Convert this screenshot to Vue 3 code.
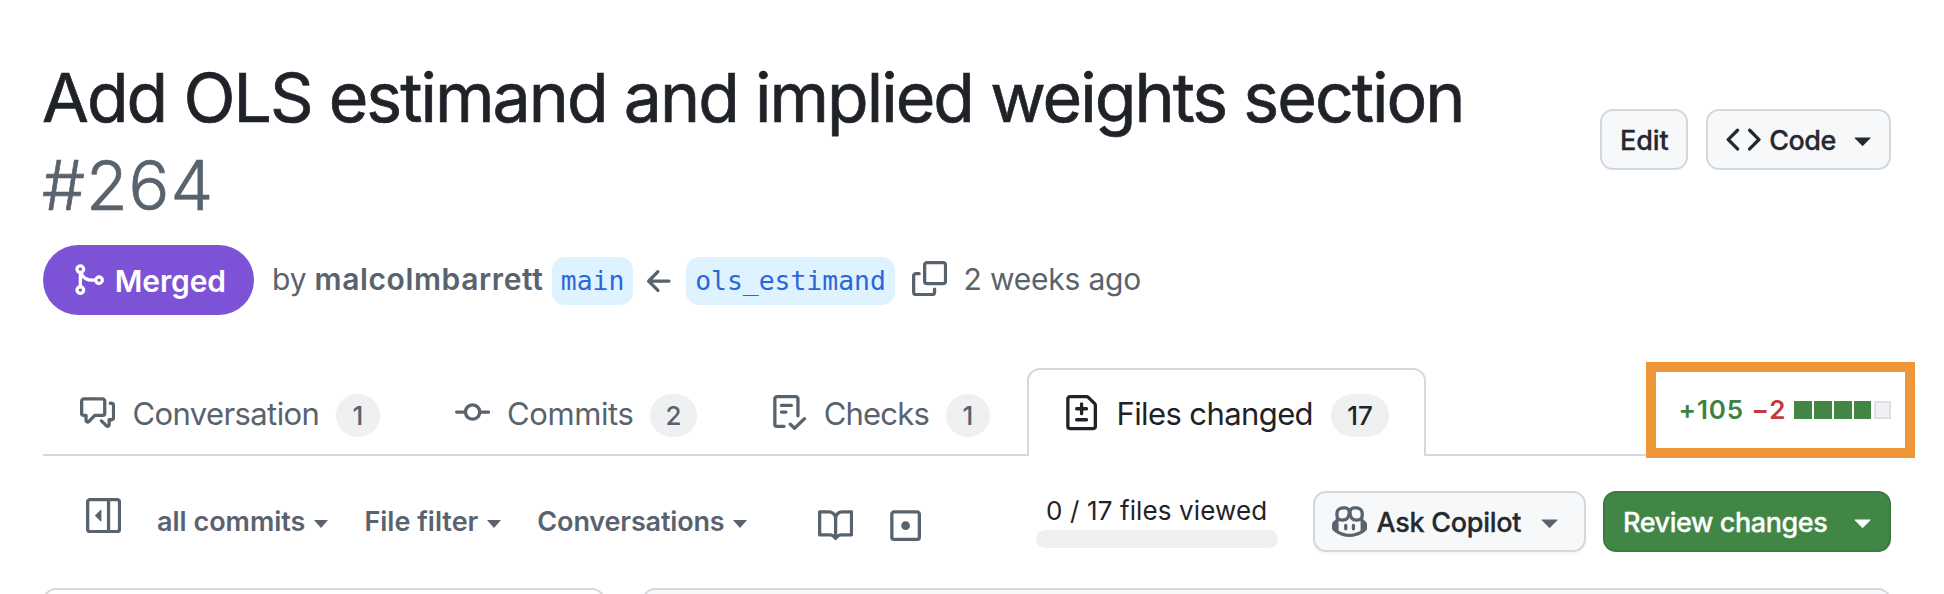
<script setup>
const icons = {
  merge: 'M5.45 5.154A4.25 4.25 0 0 0 9.25 7.5h1.378a2.251 2.251 0 1 1 0 1.5H9.25A5.734 5.734 0 0 1 5 7.123v3.505a2.25 2.25 0 1 1-1.5 0V5.372a2.25 2.25 0 1 1 1.95-.218ZM4.25 13.5a.75.75 0 1 0 0-1.5.75.75 0 0 0 0 1.5Zm8.5-4.5a.75.75 0 1 0 0-1.5.75.75 0 0 0 0 1.5ZM5 3.25a.75.75 0 1 0 0 .005V3.25Z',
  arrow: 'M7.78 12.53a.75.75 0 0 1-1.06 0L2.47 8.28a.75.75 0 0 1 0-1.06l4.25-4.25a.751.751 0 0 1 1.042.018.751.751 0 0 1 .018 1.042L4.81 7h7.44a.75.75 0 0 1 0 1.5H4.81l2.97 2.97a.75.75 0 0 1 0 1.06Z',
  copy: 'M0 6.75C0 5.784.784 5 1.75 5h1.5a.75.75 0 0 1 0 1.5h-1.5a.25.25 0 0 0-.25.25v7.5c0 .138.112.25.25.25h7.5a.25.25 0 0 0 .25-.25v-1.5a.75.75 0 0 1 1.5 0v1.5A1.75 1.75 0 0 1 9.25 16h-7.5A1.75 1.75 0 0 1 0 14.25ZM5 1.75C5 .784 5.784 0 6.75 0h7.5C15.216 0 16 .784 16 1.75v7.5A1.75 1.75 0 0 1 14.25 11h-7.5A1.75 1.75 0 0 1 5 9.25Zm1.75-.25a.25.25 0 0 0-.25.25v7.5c0 .138.112.25.25.25h7.5a.25.25 0 0 0 .25-.25v-7.5a.25.25 0 0 0-.25-.25Z',
  code: 'm11.28 3.22 4.25 4.25a.75.75 0 0 1 0 1.06l-4.25 4.25a.749.749 0 0 1-1.275-.326.749.749 0 0 1 .215-.734L13.94 8l-3.72-3.72a.749.749 0 0 1 .326-1.275.749.749 0 0 1 .734.215Zm-6.56 0a.751.751 0 0 1 1.042.018.751.751 0 0 1 .018 1.042L2.06 8l3.72 3.72a.749.749 0 0 1-.326 1.275.749.749 0 0 1-.734-.215L.47 8.53a.75.75 0 0 1 0-1.06Z',
  caret: 'm4.427 7.427 3.396 3.396a.25.25 0 0 0 .354 0l3.396-3.396A.25.25 0 0 0 11.396 7H4.604a.25.25 0 0 0-.177.427Z',
  discussion: 'M1.75 1h8.5c.966 0 1.75.784 1.75 1.75v5.5A1.75 1.75 0 0 1 10.25 10H7.061l-2.574 2.573A1.458 1.458 0 0 1 2 11.543V10h-.25A1.75 1.75 0 0 1 0 8.25v-5.5C0 1.784.784 1 1.75 1ZM1.5 2.75v5.5c0 .138.112.25.25.25h1a.75.75 0 0 1 .75.75v2.19l2.72-2.72a.749.749 0 0 1 .53-.22h3.5a.25.25 0 0 0 .25-.25v-5.5a.25.25 0 0 0-.25-.25h-8.5a.25.25 0 0 0-.25.25Zm13 2a.25.25 0 0 0-.25-.25h-.5a.75.75 0 0 1 0-1.5h.5c.966 0 1.75.784 1.75 1.75v5.5A1.75 1.75 0 0 1 14.25 12H14v1.543a1.458 1.458 0 0 1-2.487 1.03L9.22 12.28a.749.749 0 0 1 .326-1.275.749.749 0 0 1 .734.215l2.22 2.22v-2.19a.75.75 0 0 1 .75-.75h1a.25.25 0 0 0 .25-.25Z',
  commit: 'M11.93 8.5a4.002 4.002 0 0 1-7.86 0H.75a.75.75 0 0 1 0-1.5h3.32a4.002 4.002 0 0 1 7.86 0h3.32a.75.75 0 0 1 0 1.5Zm-1.43-.75a2.5 2.5 0 1 0-5 0 2.5 2.5 0 0 0 5 0Z',
  checklist: 'M2.5 1.75v11.5c0 .138.112.25.25.25h3.17a.75.75 0 0 1 0 1.5H2.75A1.75 1.75 0 0 1 1 13.25V1.75C1 .784 1.784 0 2.75 0h8.5C12.216 0 13 .784 13 1.75v7.736a.75.75 0 0 1-1.5 0V1.75a.25.25 0 0 0-.25-.25h-8.5a.25.25 0 0 0-.25.25Zm13.274 9.537v-.001l-4.557 4.45a.75.75 0 0 1-1.055-.008l-1.943-1.95a.75.75 0 0 1 1.062-1.058l1.419 1.425 4.026-3.932a.75.75 0 1 1 1.048 1.074ZM4.75 4h4.5a.75.75 0 0 1 0 1.5h-4.5a.75.75 0 0 1 0-1.5ZM4 7.75A.75.75 0 0 1 4.75 7h2a.75.75 0 0 1 0 1.5h-2A.75.75 0 0 1 4 7.75Z',
  diff: 'M1 1.75C1 .784 1.784 0 2.75 0h7.586c.464 0 .909.184 1.237.513l2.914 2.914c.329.328.513.773.513 1.237v9.586A1.75 1.75 0 0 1 13.25 16H2.75A1.75 1.75 0 0 1 1 14.25Zm1.75-.25a.25.25 0 0 0-.25.25v12.5c0 .138.112.25.25.25h10.5a.25.25 0 0 0 .25-.25V4.664a.25.25 0 0 0-.073-.177l-2.914-2.914a.25.25 0 0 0-.177-.073ZM8 3.25a.75.75 0 0 1 .75.75v1.5h1.5a.75.75 0 0 1 0 1.5h-1.5v1.5a.75.75 0 0 1-1.5 0V7h-1.5a.75.75 0 0 1 0-1.5h1.5V4A.75.75 0 0 1 8 3.25Zm-3 8a.75.75 0 0 1 .75-.75h4.5a.75.75 0 0 1 0 1.5h-4.5a.75.75 0 0 1-.75-.75Z',
  sidebar: 'm4.177 7.823 2.396-2.396A.25.25 0 0 1 7 5.604v4.792a.25.25 0 0 1-.427.177L4.177 8.177a.25.25 0 0 1 0-.354ZM0 1.75C0 .784.784 0 1.75 0h12.5C15.216 0 16 .784 16 1.75v12.5A1.75 1.75 0 0 1 14.25 16H1.75A1.75 1.75 0 0 1 0 14.25Zm1.75-.25a.25.25 0 0 0-.25.25v12.5c0 .138.112.25.25.25H9.5v-13Zm12.5 13a.25.25 0 0 0 .25-.25V1.75a.25.25 0 0 0-.25-.25H11v13Z',
  book: 'M0 1.75A.75.75 0 0 1 .75 1h4.253c1.227 0 2.317.59 3 1.501A3.743 3.743 0 0 1 11.006 1h4.245a.75.75 0 0 1 .75.75v10.5a.75.75 0 0 1-.75.75h-4.507a2.25 2.25 0 0 0-1.591.659l-.622.621a.75.75 0 0 1-1.06 0l-.622-.621A2.25 2.25 0 0 0 5.258 13H.75a.75.75 0 0 1-.75-.75Zm7.251 10.324.004-5.073-.002-2.253A2.25 2.25 0 0 0 5.003 2.5H1.5v9h3.757a3.75 3.75 0 0 1 1.994.574ZM8.755 4.75l-.004 7.322a3.752 3.752 0 0 1 1.992-.572H14.5v-9h-3.495a2.25 2.25 0 0 0-2.25 2.25Z',
  dot: 'M8 10a2 2 0 1 1 0-4 2 2 0 0 1 0 4ZM1 2.75C1 1.784 1.784 1 2.75 1h10.5c.966 0 1.75.784 1.75 1.75v10.5A1.75 1.75 0 0 1 13.25 15H2.75A1.75 1.75 0 0 1 1 13.25Zm1.75-.25a.25.25 0 0 0-.25.25v10.5c0 .138.112.25.25.25h10.5a.25.25 0 0 0 .25-.25V2.75a.25.25 0 0 0-.25-.25Z',
  copilot: 'M7.998 15.035c-4.562 0-7.873-2.914-7.998-3.749V9.338c.085-.628.677-1.686 1.588-2.065.013-.07.024-.143.036-.218.029-.183.06-.384.126-.612-.201-.508-.254-1.084-.254-1.656 0-.87.128-1.769.693-2.484.579-.733 1.494-1.124 2.724-1.261 1.206-.134 2.262.034 2.944.765.05.053.096.108.139.165.044-.057.094-.112.143-.165.682-.731 1.738-.899 2.944-.765 1.23.137 2.145.528 2.724 1.261.566.715.693 1.614.693 2.484 0 .572-.053 1.148-.254 1.656.066.228.098.429.126.612.012.076.024.148.037.218.924.385 1.522 1.471 1.591 2.095v1.872c0 .766-3.351 3.795-8.002 3.795Zm0-1.485c2.28 0 4.584-1.11 5.002-1.433V7.862l-.023-.116c-.49.21-1.075.291-1.727.291-1.146 0-2.059-.327-2.71-.991A3.222 3.222 0 0 1 8 6.303a3.24 3.24 0 0 1-.544.743c-.65.664-1.563.991-2.71.991-.652 0-1.236-.081-1.727-.291l-.023.116v4.255c.419.323 2.722 1.433 5.002 1.433ZM6.762 2.83c-.193-.206-.637-.413-1.682-.297-1.019.113-1.479.404-1.713.7-.247.312-.369.789-.369 1.554 0 .793.129 1.171.308 1.371.162.181.519.379 1.442.379.853 0 1.339-.235 1.638-.54.315-.322.527-.827.617-1.553.117-.935-.037-1.395-.241-1.614Zm4.155-.297c-1.044-.116-1.488.091-1.681.297-.204.219-.359.679-.242 1.614.091.726.303 1.231.618 1.553.299.305.784.54 1.638.54.922 0 1.28-.198 1.442-.379.179-.2.308-.578.308-1.371 0-.765-.123-1.242-.37-1.554-.233-.296-.693-.587-1.713-.7ZM6.25 9.037a.75.75 0 0 1 .75.75v1.501a.75.75 0 0 1-1.5 0V9.787a.75.75 0 0 1 .75-.75Zm4.25.75v1.501a.75.75 0 0 1-1.5 0V9.787a.75.75 0 0 1 1.5 0Z'
}

const tabs = [
  { key: 'conversation', icon: 'discussion', label: 'Conversation', count: 1 },
  { key: 'commits', icon: 'commit', label: 'Commits', count: 2 },
  { key: 'checks', icon: 'checklist', label: 'Checks', count: 1 },
  { key: 'files', icon: 'diff', label: 'Files changed', count: 17 }
]

const filters = [
  { key: 'all', label: 'all commits' },
  { key: 'by-file', label: 'File filter' },
  { key: 'conv', label: 'Conversations' }
]
</script>

<template>
  <main class="page">
    <header class="header">
      <h1 class="title">
        <span class="name">Add OLS estimand and implied weights section</span>
        <span class="number">#264</span>
      </h1>
      <div class="actions">
        <button class="btn edit">Edit</button>
        <button class="btn code">
          <svg class="icon" viewBox="0 0 16 16"><path :d="icons.code" /></svg>
          <span class="code-label">Code</span>
          <svg class="icon" viewBox="0 0 16 16"><path :d="icons.caret" /></svg>
        </button>
      </div>
    </header>

    <div class="meta">
      <span class="state">
        <svg class="icon" viewBox="0 0 16 16"><path fill-rule="evenodd" :d="icons.merge" /></svg>
        <span>Merged</span>
      </span>
      <span class="by">by</span>
      <strong class="author">malcolmbarrett</strong>
      <code class="branch">main</code>
      <svg class="icon arrow" viewBox="0 0 16 16"><path :d="icons.arrow" /></svg>
      <code class="branch">ols_estimand</code>
      <svg class="icon copy" viewBox="0 0 16 16"><path :d="icons.copy" /></svg>
      <span class="time">2 weeks ago</span>
    </div>

    <nav class="tabs">
      <a v-for="tab in tabs" :key="tab.key" class="tab" :class="[tab.key, { active: tab.key === 'files' }]">
        <svg class="icon" viewBox="0 0 16 16"><path :d="icons[tab.icon]" /></svg>
        <span class="label">{{ tab.label }}</span>
        <span class="count">{{ tab.count }}</span>
      </a>
      <div class="diffstat">
        <span class="added">+105</span>
        <span class="removed">−2</span>
        <span class="blocks">
          <i v-for="n in 5" :key="n" class="block" :class="{ neutral: n === 5 }"></i>
        </span>
      </div>
    </nav>

    <section class="toolbar">
      <svg class="icon sidebar" viewBox="0 0 16 16"><path :d="icons.sidebar" /></svg>
      <span v-for="f in filters" :key="f.key" class="filter" :class="f.key">{{ f.label }}<i class="drop"></i></span>
      <svg class="icon book" viewBox="0 0 16 16"><path :d="icons.book" /></svg>
      <svg class="icon dot" viewBox="0 0 16 16"><path :d="icons.dot" /></svg>
      <div class="viewed">
        <span class="viewed-text">0 / 17 files viewed</span>
        <span class="progress"></span>
      </div>
      <button class="btn copilot">
        <svg class="icon muted" viewBox="0 0 16 16"><path :d="icons.copilot" /></svg>
        <span class="copilot-label">Ask Copilot</span>
        <svg class="icon muted" viewBox="0 0 16 16"><path :d="icons.caret" /></svg>
      </button>
      <button class="btn review">
        <span class="review-label">Review changes</span>
        <svg class="icon" viewBox="0 0 16 16"><path :d="icons.caret" /></svg>
      </button>
    </section>

    <section class="panels">
      <div class="panel tree"></div>
      <div class="panel changes"></div>
    </section>
  </main>
</template>

<style>
body {
  margin: 0;
  background: #fff;
}
</style>

<style scoped>
.page {
  box-sizing: border-box;
  width: 1944px;
  height: 594px;
  padding: 53px 53px 0 43px;
  overflow: hidden;
  display: flex;
  flex-direction: column;
  font-family: Inter, "Liberation Sans", sans-serif;
  color: #1f2328;
  white-space: nowrap;
}
.page * {
  box-sizing: border-box;
}
.icon {
  width: 35.2px;
  height: 35.2px;
  flex: none;
  fill: currentColor;
}
.header {
  height: 176px;
  flex: none;
  display: flex;
  justify-content: space-between;
}
.title {
  margin: 0 0 0 -1px;
  font-size: 68px;
  line-height: 88px;
  font-weight: 400;
  display: flex;
  flex-direction: column;
}
.name {
  letter-spacing: -1.98px;
  -webkit-text-stroke: 0.7px currentColor;
}
.number {
  font-weight: 300;
  color: #59636e;
  letter-spacing: 0.9px;
  -webkit-text-stroke: 0.7px currentColor;
}
.actions {
  display: flex;
  gap: 18px;
  margin-top: 56px;
}
.btn {
  height: 61px;
  padding: 0;
  border: 2px solid #d1d9e0;
  border-radius: 13px;
  background: #f6f8fa;
  color: #25292e;
  font: 500 27px/57px Inter, "Liberation Sans", sans-serif;
  -webkit-text-stroke: 0.3px currentColor;
  display: flex;
  align-items: center;
  flex: none;
  text-align: left;
}
.edit {
  width: 88px;
  padding: 1px 0 0 18px;
  letter-spacing: -0.1px;
}
.code {
  width: 185px;
  padding-left: 18px;
}
.code-label {
  width: 75px;
  margin: 2px -1px 0 8px;
  letter-spacing: -0.5px;
}
.code .icon:last-child {
  margin-left: 2px;
}
.meta {
  height: 70px;
  margin-top: 16px;
  flex: none;
  display: flex;
  align-items: center;
  font-size: 30px;
  line-height: 68px;
  color: #59636e;
}
.state {
  width: 211px;
  height: 70px;
  padding-left: 27.5px;
  border-radius: 35px;
  background: #7c52d6;
  color: #fff;
  font-weight: 600;
  line-height: 72px;
  display: flex;
  align-items: center;
  gap: 9px;
  letter-spacing: -0.1px;
}
.state span {
  margin-top: 2px;
}
.by {
  margin: -2px 0 0 18px;
  width: 42.5px;
}
.author {
  width: 237.5px;
  margin-top: -2px;
  font-weight: 600;
  letter-spacing: 0.62px;
}
.branch {
  height: 48px;
  margin-top: 2px;
  padding: 0 8.8px;
  border-radius: 13px;
  background: #dff2ff;
  color: #2b66d9;
  font: 26.4px/47px "DejaVu Sans Mono", "Liberation Mono", monospace;
}
.arrow {
  margin: 3px 9px 0 9px;
}
.copy {
  margin-left: 17.3px;
  margin-top: -3px;
}
.time {
  margin: -2px 0 0 16.5px;
  letter-spacing: -0.2px;
}
.tabs {
  height: 88px;
  margin-top: 53px;
  flex: none;
  display: flex;
  border-bottom: 2px solid #d1d9e0;
}
.tab {
  height: 88px;
  display: flex;
  align-items: center;
  font-size: 31px;
  line-height: 90px;
  color: #59636e;
}
.tab .icon {
  margin-top: 1px;
}
.tab .label {
  margin-top: 3px;
  line-height: 84px;
}
.count {
  height: 43px;
  margin-top: 7px;
  border-radius: 22px;
  background: #eff0f2;
  font-size: 26px;
  line-height: 43px;
  font-weight: 500;
  text-align: center;
}
.conversation {
  margin-left: 37px;
  width: 375px;
}
.conversation .label {
  width: 203.5px;
  margin-left: 17.3px;
  letter-spacing: -0.6px;
}
.conversation .count {
  width: 44px;
}
.commits {
  width: 315.5px;
}
.commits .label {
  width: 143px;
  margin-left: 16.8px;
  letter-spacing: -0.4px;
}
.commits .count {
  width: 47px;
}
.checks {
  width: 256.5px;
}
.checks .label {
  width: 122.3px;
  margin-left: 18px;
  letter-spacing: -0.8px;
}
.checks .count {
  width: 44px;
}
.active {
  width: 399px;
  padding-left: 34.8px;
  border: 2px solid #d1d9e0;
  border-bottom: 0;
  border-radius: 13px 13px 0 0;
  background: #fff;
  color: #1f2328;
}
.active .icon {
  margin-top: 0;
}
.active .label {
  margin-top: 1px;
  margin-left: 17.5px;
  width: 214.5px;
  letter-spacing: -0.6px;
}
.active .count {
  width: 58px;
  margin-top: 5px;
}
.diffstat {
  position: relative;
  width: 269px;
  height: 96px;
  margin: -6px -24px 0 auto;
  padding-left: 22.5px;
  border: 10px solid #ef9738;
  background: #fff;
  display: flex;
  align-items: center;
  font-size: 26px;
  line-height: 76px;
  font-weight: 600;
}
.added {
  width: 73px;
  color: #3f8043;
  letter-spacing: 0.9px;
}
.removed {
  width: 42.5px;
  color: #c73a3a;
  letter-spacing: 1px;
}
.blocks {
  display: flex;
  gap: 2px;
}
.block {
  width: 18px;
  height: 18px;
  background: #428646;
}
.block:nth-child(4) {
  width: 17px;
  margin-right: 1px;
}
.block.neutral {
  width: 17px;
  background: #eff0f2;
  border: 2px solid #dcdfe4;
}
.toolbar {
  height: 132px;
  flex: none;
  padding-left: 43px;
  display: flex;
  align-items: flex-start;
  color: #59636e;
}
.sidebar {
  margin-top: 42px;
}
.filter {
  margin-top: 36px;
  font-size: 27px;
  line-height: 60px;
  font-weight: 600;
  display: flex;
  align-items: center;
}
.drop {
  margin: 3px 0 0 8.5px;
  border: 7.7px solid transparent;
  border-top: 8.5px solid currentColor;
  border-bottom: 0;
}
.all {
  margin-left: 35.8px;
  width: 207.5px;
}
.by-file {
  width: 173px;
}
.conv {
  width: 280.5px;
  letter-spacing: -0.15px;
}
.book {
  margin-top: 51.8px;
}
.dot {
  margin-top: 51.8px;
  margin-left: 34.6px;
}
.viewed {
  width: 242px;
  margin: 35px 0 0 113.4px;
  display: flex;
  flex-direction: column;
}
.viewed-text {
  padding-left: 10px;
  font-size: 26px;
  line-height: 39px;
  letter-spacing: 0.12px;
  color: #1f2328;
}
.progress {
  height: 18px;
  border-radius: 9px;
  background: #eff0f2;
}
.copilot {
  width: 273px;
  margin: 35px 17px 0 35px;
  padding-left: 17px;
  box-shadow: 0 2px 2px rgba(31, 35, 40, 0.04);
}
.muted {
  color: #59636e;
}
.copilot-label {
  width: 155px;
  margin: 2px 0 0 9.4px;
  letter-spacing: -0.3px;
}
.review {
  width: 288px;
  margin-top: 35px;
  padding-left: 18px;
  border-color: #3b7a41;
  background: #428646;
  color: #fff;
}
.review-label {
  width: 222px;
  margin-top: 2px;
  letter-spacing: -0.43px;
}
.panels {
  display: flex;
  gap: 37px;
}
.panel {
  height: 60px;
  border: 2px solid #d1d9e0;
  border-radius: 13px;
}
.tree {
  width: 562px;
}
.changes {
  width: 1249px;
  background: #f6f8fa;
}
</style>
